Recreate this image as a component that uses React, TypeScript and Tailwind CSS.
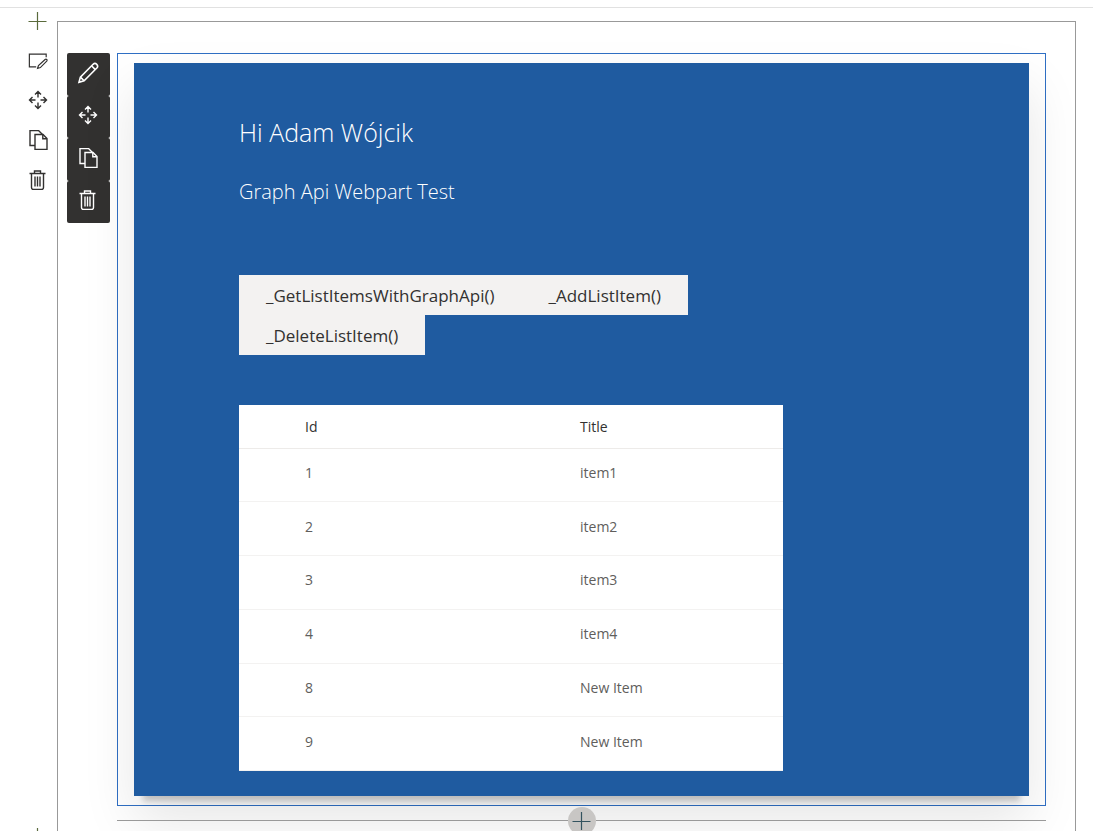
import type { ReactNode } from 'react';

type IconProps = { children: ReactNode };

function Icon({ children }: IconProps) {
  return (
    <svg width="20" height="20" viewBox="0 0 20 20" fill="none" stroke="currentColor" strokeWidth="1.4" aria-hidden="true">
      {children}
    </svg>
  );
}

const PlusIcon = () => (
  <Icon>
    <path d="M9.500 1v18M0.500 10.500h18" strokeWidth="1.2" />
  </Icon>
);

const SectionEditIcon = () => (
  <svg width="22" height="20" viewBox="0 0 22 20" fill="none" stroke="currentColor" strokeWidth="1.3" aria-hidden="true">
    <path d="M9 17.500H1.500v-14h18.500v3.500" />
    <path d="M10.500 19.300l1-3.100 7.300-6.800c1.300-1 2.800.500 1.800 1.800l-7 7.100-3.100 1z" />
  </svg>
);

const PencilIcon = () => (
  <svg width="22" height="22" viewBox="0 0 22 22" fill="none" stroke="currentColor" strokeWidth="1.6" aria-hidden="true">
    <path d="M2 20.300l1.400-5.200L16.100 2.300c2.500-2.300 6 1.200 3.700 3.700L7.100 18.800z" />
    <path d="M14.500 3.800l3.800 3.800M3.400 15.100l3.700 3.700" />
  </svg>
);

const MoveIcon = () => (
  <Icon>
    <path d="M10 7.500V1.500M7 4.500l3-3 3 3M10 12.500v6M7 15.500l3 3 3-3M7.500 10h-6M4.500 7l-3 3 3 3M12.500 10h6M15.500 7l3 3-3 3" />
  </Icon>
);

const CopyIcon = () => (
  <Icon>
    <path d="M7 15.500h-5v-15h8.500l4 4" />
    <path d="M7 4.500h8l4 4v11h-12z" />
    <path d="M14.800 4.500v4.200h4.200" />
  </Icon>
);

const TrashIcon = () => (
  <Icon>
    <path d="M1.500 3.500h16M6.500 3.500v-2.500h6v2.500M3.500 3.500v14q0 2 2 2h8q2 0 2-2v-14M7 6.500v10M9.500 6.500v10M12 6.500v10" />
  </Icon>
);

const sectionTools = [
  { label: 'Edit section', icon: <SectionEditIcon /> },
  { label: 'Move section', icon: <MoveIcon /> },
  { label: 'Duplicate section', icon: <CopyIcon /> },
  { label: 'Delete section', icon: <TrashIcon /> },
];

const webPartTools = [
  { label: 'Edit web part', icon: <PencilIcon /> },
  { label: 'Move web part', icon: <MoveIcon /> },
  { label: 'Duplicate web part', icon: <CopyIcon /> },
  { label: 'Delete web part', icon: <TrashIcon /> },
];

const items = [
  { id: 1, title: 'item1' },
  { id: 2, title: 'item2' },
  { id: 3, title: 'item3' },
  { id: 4, title: 'item4' },
  { id: 8, title: 'New Item' },
  { id: 9, title: 'New Item' },
];

function SectionToolbar() {
  return (
    <div className="flex w-[57px] shrink-0 flex-col items-end pr-[9px] text-[#323130]">
      <button type="button" aria-label="Add a new section" className="flex h-8 w-5 items-center justify-center pb-1.5 text-[#5a6a3c]">
        <PlusIcon />
      </button>
      {sectionTools.map((tool) => (
        <button key={tool.label} type="button" aria-label={tool.label} className="flex h-10 w-5 items-center justify-center">
          {tool.icon}
        </button>
      ))}
      <button type="button" aria-label="Add a section below" className="-mb-[22px] mt-auto flex h-8 w-5 items-center justify-center text-[#5a6a3c]">
        <PlusIcon />
      </button>
    </div>
  );
}

function WebPartToolbar() {
  return (
    <div className="flex h-[170px] w-[43px] shrink-0 flex-col">
      {webPartTools.map((tool) => (
        <button
          key={tool.label}
          type="button"
          aria-label={tool.label}
          className="flex flex-1 items-center justify-center rounded-xs bg-[#323130] pb-[3px] pr-px text-white"
        >
          {tool.icon}
        </button>
      ))}
    </div>
  );
}

function ItemsTable() {
  return (
    <table className="h-[366px] w-full table-fixed border-collapse bg-white text-left text-sm text-[#605e5c]">
      <thead>
        <tr className="h-[43px] border-b border-[#edebe9] text-[#323130]">
          <th className="w-1/2 pl-[66px] pt-0.5 font-normal">Id</th>
          <th className="pl-[69px] pt-0.5 font-normal">Title</th>
        </tr>
      </thead>
      <tbody>
        {items.map((item) => (
          <tr key={item.id} className="border-b border-[#f3f2f1]">
            <td className="pb-1 pl-[66px]">{item.id}</td>
            <td className="pb-1 pl-[69px]">{item.title}</td>
          </tr>
        ))}
      </tbody>
    </table>
  );
}

function ActionButton({ children }: { children: ReactNode }) {
  return (
    <button type="button" className="h-10 bg-[#f3f2f1] px-[27px] pt-0.5 text-[17px] font-medium text-[#323130]">
      {children}
    </button>
  );
}

export default function App() {
  return (
    <div className="flex h-screen flex-col overflow-hidden bg-white font-['Open_Sans','Noto_Sans',sans-serif]">
      <header className="h-2 shrink-0 border-b border-[#e1e1e1]" />
      <main className="flex min-h-0 flex-1">
        <SectionToolbar />
        <section className="mr-[17px] mt-[13px] flex min-w-0 flex-1 items-start gap-[7px] overflow-hidden border border-b-0 border-[#999] pl-[9px] pr-[29px] pt-[31px]">
          <WebPartToolbar />
          <div className="min-w-0 flex-1">
            <div className="border border-[#2f6fc4] px-4 pb-[9px] pt-[9px]">
              <div className="bg-[#1f5ba0] pb-[25px] pl-[105px] pr-6 pt-[49px] text-white shadow-[0_14px_6px_-9px_rgba(0,0,0,0.2),0_25px_50px_0_rgba(0,0,0,0.1)]">
                <div className="max-w-[544px]">
                  <h1 className="text-[25px] leading-10 font-light">Hi Adam Wójcik</h1>
                  <h2 className="mt-[22px] text-xl leading-9 font-light">Graph Api Webpart Test</h2>
                  <div className="mb-[50px] mt-[65px] flex flex-wrap">
                    <ActionButton>_GetListItemsWithGraphApi()</ActionButton>
                    <ActionButton>_AddListItem()</ActionButton>
                    <ActionButton>_DeleteListItem()</ActionButton>
                  </div>
                  <ItemsTable />
                </div>
              </div>
            </div>
            <div className="flex h-[29px] items-center">
              <div className="h-px flex-1 bg-[#999]" />
              <button type="button" aria-label="Add a new web part" className="flex size-7 items-center justify-center rounded-full bg-[#c8c6c4] text-[#33535f]">
                <PlusIcon />
              </button>
              <div className="h-px flex-1 bg-[#999]" />
            </div>
          </div>
        </section>
      </main>
    </div>
  );
}
